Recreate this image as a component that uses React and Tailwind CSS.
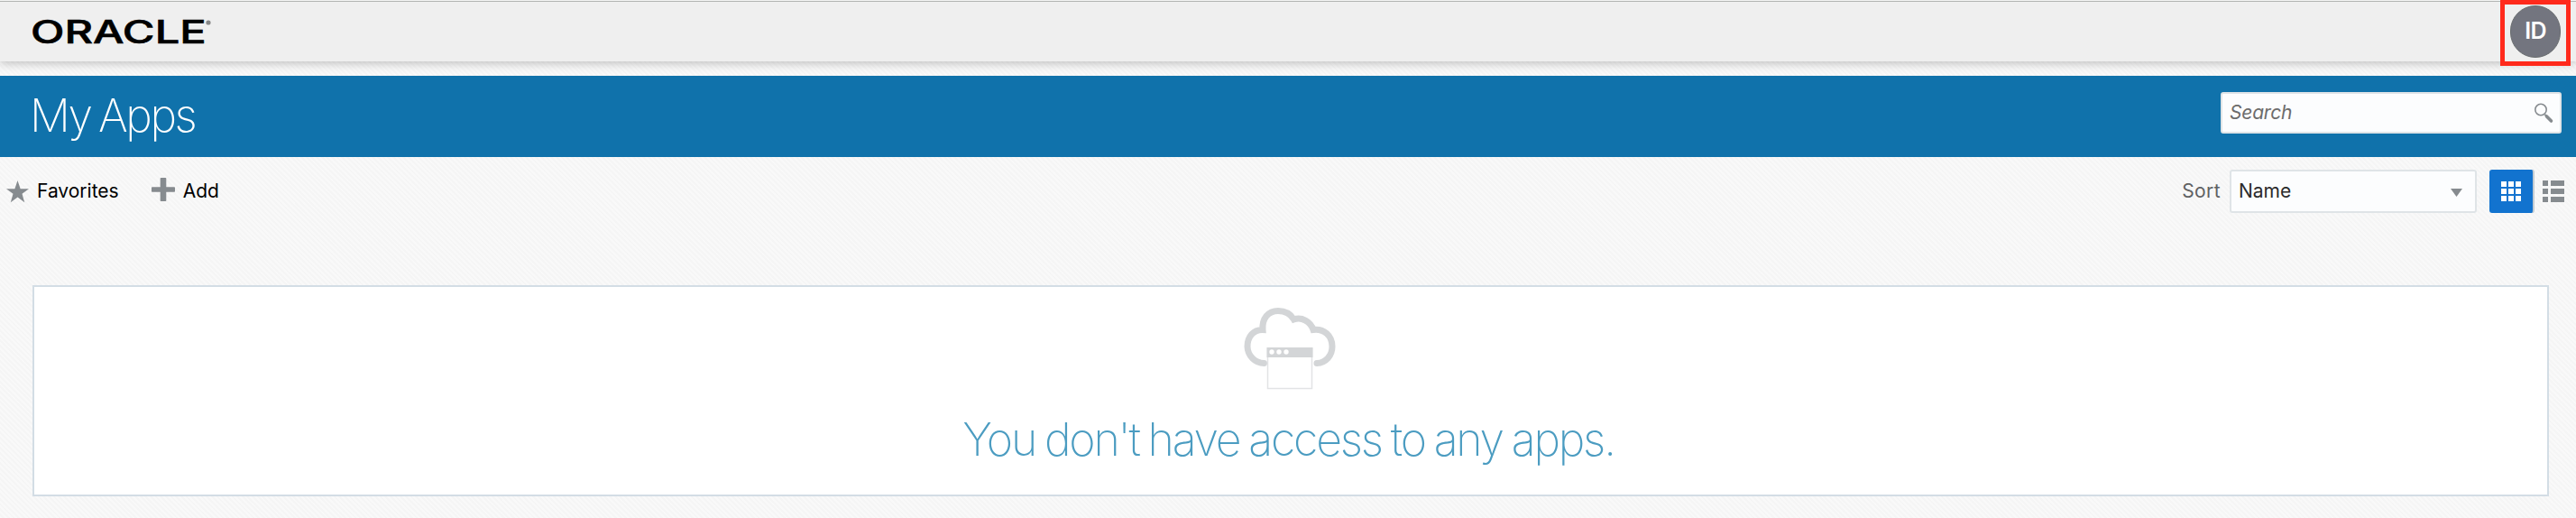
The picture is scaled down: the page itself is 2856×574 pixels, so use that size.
import React from "react";

function OracleLogo() {
  return (
    <svg width="200" height="28" viewBox="0 0 200 28" className="block overflow-visible" role="img" aria-label="Oracle">
      <text
        transform="translate(-2 0) scale(1.32 1)"
        y="26.5"
        textLength="147.500"
        lengthAdjust="spacingAndGlyphs"
        className="fill-black stroke-black stroke-[0.6px] font-['Inter'] text-[35px] font-[450]"
      >
        ORACLE
      </text>
      <circle cx="195" cy="4" r="2.6" fill="#888" />
    </svg>
  );
}

function Header() {
  return (
    <header className="flex h-[68px] items-start justify-between bg-[linear-gradient(#f4f4f4_0_1px,#b2b5b2_1px_2px,#efefef_2px)] shadow-[0_2px_10px_rgba(0,0,0,0.24)]">
      <div className="pt-[21px] pl-9">
        <OracleLogo />
      </div>
      <div className="mr-[6px] flex h-[73px] w-[78px] shrink-0 items-center justify-center border-[5px] border-[#ff2a1c] pb-[3px]">
        <div className="flex h-[58px] w-14 items-center justify-center rounded-full border border-[#696d6f] bg-[#73757f] text-[25px] font-semibold tracking-[-0.8px] text-white">
          ID
        </div>
      </div>
    </header>
  );
}

function TitleBar() {
  return (
    <div className="mt-4 flex h-[90px] justify-between bg-[#1072ab] pr-4 pl-[33px]">
      <h1 className="pt-[12px] text-[50px] leading-[64px] font-[250] tracking-[-2.5px] [word-spacing:-3px] text-white">My Apps</h1>
      <div className="mt-[18px] flex h-[46px] w-[378px] items-center justify-between rounded-[3px] border-2 border-[#dfe4e7] bg-[#fcfdfe] pr-[6px] pl-2">
        <span className="text-[21px] tracking-[-0.2px] text-[#6c6c6c] italic">Search</span>
        <svg width="24" height="24" viewBox="0 0 24 24" fill="none" stroke="#868b8f">
          <circle cx="9" cy="8.5" r="6.2" strokeWidth="1.6" />
          <path d="M13.5 14 15 15.5" strokeWidth="2" />
          <path d="m15.5 16 5 5" strokeWidth="3.6" strokeLinecap="round" />
        </svg>
      </div>
    </div>
  );
}

function Toolbar() {
  return (
    <div className="flex h-[76px] items-center justify-between pr-[13px] pl-[7px]">
      <div className="flex items-center text-[21px] text-black">
        <svg width="25" height="25" viewBox="0 0 24 24" fill="#868b8f">
          <path d="m12 0 3 8.8h9l-7.2 5.4 2.6 9L12 17.8l-7.4 5.4 2.6-9L0 8.8h9z" />
        </svg>
        <span className="ml-[9px]">Favorites</span>
        <svg className="-mt-1 ml-9" width="26" height="26" viewBox="0 0 26 26" fill="#868b8f">
          <path d="M10.500 0h5a.8.8 0 0 1 .8.8v9.400h8.900a.8.8 0 0 1 .8.8v4a.8.8 0 0 1-.8.8h-8.900v9.400a.8.8 0 0 1-.8.8h-5a.8.8 0 0 1-.8-.8v-9.400H.8A.8.8 0 0 1 0 15v-4a.8.8 0 0 1 .8-.8h8.900V.8a.8.8 0 0 1 .8-.8z" />
        </svg>
        <span className="ml-[9px]">Add</span>
      </div>
      <div className="flex items-center text-[21px]">
        <span className="tracking-[0.4px] text-[#5f6163]">Sort</span>
        <div className="ml-[10px] flex h-12 w-[274px] items-center justify-between rounded-[3px] border-2 border-[#dfe4e7] bg-[#fcfdfe] pr-[14px] pl-2 text-[#2b2b2b]">
          Name
          <svg className="mt-[3px]" width="13" height="9" viewBox="0 0 13 9" fill="#868b8f">
            <path d="M0 0h13L6.5 9z" />
          </svg>
        </div>
        <div className="ml-[14px] flex h-12 w-[50px] items-center justify-center rounded-[3px] border-r-2 border-[#c3ccd3] bg-[#1273cf]">
          <div className="grid grid-cols-3 gap-[2px]">
            {Array.from({ length: 9 }, (_, i) => (
              <i key={i} className="h-[6px] w-[6px] bg-white" />
            ))}
          </div>
        </div>
        <svg className="ml-[9px]" width="24" height="25" viewBox="0 0 24 25" fill="#868b8f">
          <path d="M0 0h6v6H0zM9 0h15v6H9zM0 9h6v6H0zM9 9h15v6H9zM0 18h6v6H0zM9 18h15v6H9z" />
        </svg>
      </div>
    </div>
  );
}

function EmptyState() {
  return (
    <section className="mt-[66px] mr-[30px] ml-9 flex h-[234px] flex-col items-center border-2 border-[#d3dde5] bg-white pt-[22px]">
      <svg width="104" height="92" viewBox="0 0 104 92" fill="none">
        <path
          d="M22.5 62.5A19 19 0 0 1 4 44C4 33 11 25 21 25.500C20 13 27 4.500 38 4.500C46 4.500 52 8 55.500 14C64 11 74 16 77 25.500C89 24 98 32 98 44C98 54 91 62 81 62.500"
          stroke="#d3d5d7"
          strokeWidth="7"
          strokeLinecap="round"
        />
        <path d="M26.500 46h49v44.500h-49z" fill="#fff" stroke="#e2e3e5" strokeWidth="1.500" />
        <path d="M25.500 45h51v11h-51z" fill="#d3d5d7" />
        <g fill="#fff">
          <circle cx="31" cy="50" r="2.700" />
          <circle cx="39" cy="50" r="2.700" />
          <circle cx="47" cy="50" r="2.700" />
        </g>
      </svg>
      <p className="mt-[23px] pr-[5px] text-[50px] leading-[64px] font-[250] tracking-[-2.2px] [word-spacing:-2px] text-[#4b9cc1]">
        You don't have access to any apps.
      </p>
    </section>
  );
}

export default function App() {
  return (
    <div className="h-[574px] w-[2856px] overflow-hidden bg-[repeating-linear-gradient(45deg,#f9f9f9_0_2px,#f5f5f5_2px_4px)] font-['Inter',sans-serif]">
      <Header />
      <TitleBar />
      <Toolbar />
      <EmptyState />
    </div>
  );
}
